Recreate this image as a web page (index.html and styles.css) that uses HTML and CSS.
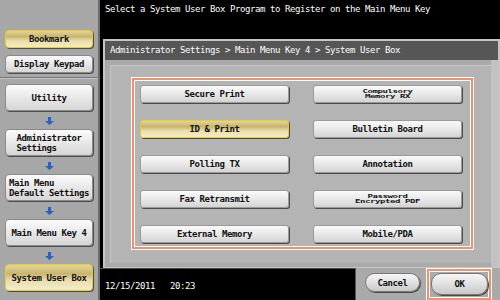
FILE: index.html
```html
<!DOCTYPE html>
<html lang="en">
<head>
  <meta charset="UTF-8">
  <title>Main Menu Key - System User Box</title>
  <link rel="stylesheet" href="styles.css">
</head>
<body>
  <div class="sidebar">
    <div class="side-top">
      <div class="sbtn short active">Bookmark</div>
      <div class="sbtn short">Display Keypad</div>
    </div>
    <div class="flow">
      <div class="sbtn">Utility</div>
      <div class="arrow"><svg width="9" height="8" viewBox="0 0 9 8"><path d="M3 0h3v4h3L4.5 8 0 4h3z" fill="#2b5fc9"/></svg></div>
      <div class="sbtn"><span class="two">Administrator<br>Settings</span></div>
      <div class="arrow"><svg width="9" height="8" viewBox="0 0 9 8"><path d="M3 0h3v4h3L4.5 8 0 4h3z" fill="#2b5fc9"/></svg></div>
      <div class="sbtn"><span class="two">Main Menu<br>Default Settings</span></div>
      <div class="arrow"><svg width="9" height="8" viewBox="0 0 9 8"><path d="M3 0h3v4h3L4.5 8 0 4h3z" fill="#2b5fc9"/></svg></div>
      <div class="sbtn">Main Menu Key 4</div>
      <div class="arrow"><svg width="9" height="8" viewBox="0 0 9 8"><path d="M3 0h3v4h3L4.5 8 0 4h3z" fill="#2b5fc9"/></svg></div>
      <div class="sbtn active">System User Box</div>
    </div>
  </div>

  <div class="main">
    <div class="title">Select a System User Box Program to Register on the Main Menu Key</div>

    <div class="panel">
      <div class="crumb">Administrator Settings &gt; Main Menu Key 4 &gt; System User Box</div>
      <div class="panel-body">
        <div class="inset">
          <div class="choices">
            <div class="btn">Secure Print</div>
            <div class="btn"><span class="tiny">Compulsory<br>Memory RX</span></div>
            <div class="btn active">ID &amp; Print</div>
            <div class="btn">Bulletin Board</div>
            <div class="btn">Polling TX</div>
            <div class="btn">Annotation</div>
            <div class="btn">Fax Retransmit</div>
            <div class="btn"><span class="tiny">Password<br>Encrypted PDF</span></div>
            <div class="btn">External Memory</div>
            <div class="btn">Mobile/PDA</div>
          </div>
        </div>
        <div class="rail"></div>
      </div>
    </div>

    <div class="bottom">
      <div class="clock">12/15/2011   20:23</div>
      <div class="actions">
        <div class="pill cancel">Cancel</div>
        <div class="ok-ring"><div class="pill ok">OK</div></div>
      </div>
    </div>
  </div>
</body>
</html>
```

FILE: styles.css
```css
body {
  margin: 0;
  width: 500px;
  height: 300px;
  overflow: hidden;
  background-color: #000;
  display: flex;
  font-family: "DejaVu Sans Mono", "Liberation Mono", monospace;
  font-size: 9px;
  letter-spacing: -0.42px;
  color: #111;
}

/* left column */
.sidebar {
  width: 98px;
  flex: none;
  background-color: #a7a7a7;
  border-right: 2px solid #6c6c6c;
}
.side-top {
  height: 78px;
  box-sizing: border-box;
  padding: 30px 0 0 5px;
  display: flex;
  flex-direction: column;
  gap: 7px;
  border-bottom: 1px solid #767676;
}
.flow {
  border-top: 1px solid #c4c4c4;
  padding: 5px 0 0 5px;
  display: flex;
  flex-direction: column;
}
.sbtn {
  width: 88px;
  height: 27px;
  box-sizing: border-box;
  border: 1px solid #8a8a8a;
  border-radius: 4px;
  background: linear-gradient(#fbfbfb, #e4e4e4 60%, #d6d6d6);
  box-shadow: 1px 1px 0 #4e4e4e;
  display: flex;
  align-items: center;
  justify-content: center;
  font-weight: bold;
  line-height: 10px;
}
.sbtn.short {
  height: 18px;
}
.sbtn.active, .btn.active {
  border-color: #e6cf2c;
  background: linear-gradient(#e2d49a, #c9b46c 35%, #e8dcaa 60%, #f4edcc);
}
.two {
  text-align: left;
}
.arrow {
  height: 18px;
  width: 88px;
  display: flex;
  align-items: center;
  justify-content: center;
  padding-top: 2px;
  box-sizing: border-box;
}
.arrow svg {
  display: block;
}

/* right side */
.main {
  flex: 1;
  display: flex;
  flex-direction: column;
}
.title {
  height: 39px;
  box-sizing: border-box;
  padding: 4px 0 0 5px;
  color: #fff;
}
.panel {
  margin-left: 3px;
  height: 229px;
  box-sizing: border-box;
  border: 2px solid #c5c5c5;
  border-bottom-width: 1px;
  display: flex;
  flex-direction: column;
}
.crumb {
  height: 19px;
  line-height: 19px;
  padding-left: 5px;
  background-color: #565656;
  color: #fff;
}
.panel-body {
  flex: 1;
  display: flex;
  background-color: #aaaaaa;
}
.inset {
  flex: 1;
  margin: 5px 0 4px 5px;
  background-color: #b4b4b4;
  border-top: 1px solid #c6c6c6;
  border-left: 1px solid #c6c6c6;
  padding: 12px 0 0 21px;
}
.rail {
  width: 7px;
  background-color: #c2c2c2;
}
.choices {
  width: 341px;
  box-sizing: border-box;
  border: 2px solid #f0906c;
  box-shadow: 0 0 0 1px #fff, inset 0 0 0 1px #fff;
  padding: 5px 9px 4px 6px;
  display: grid;
  grid-template-columns: 149px 149px;
  grid-auto-rows: 18px;
  column-gap: 24px;
  row-gap: 17px;
}
.btn {
  box-sizing: border-box;
  border: 1px solid #9a9a9a;
  border-radius: 3px;
  background: linear-gradient(#fafafa, #e6e6e6 55%, #d4d4d4);
  box-shadow: 1px 1px 0 #4a4a4a;
  display: flex;
  align-items: center;
  justify-content: center;
  font-weight: bold;
}
.tiny {
  display: inline-block;
  text-align: center;
  line-height: 9px;
  transform: scaleY(0.56);
}

/* bottom strip */
.bottom {
  flex: 1;
  display: flex;
}
.clock {
  width: 255px;
  box-sizing: border-box;
  border-top: 1px solid #4a4a4a;
  padding: 12px 0 0 5px;
  color: #fff;
  white-space: pre;
}
.actions {
  flex: 1;
  background-color: #aaaaaa;
  border-left: 1px solid #555;
  display: flex;
  align-items: flex-start;
  padding: 5px 0 0 9px;
  gap: 7px;
}
.pill {
  box-sizing: border-box;
  border: 1px solid #777;
  border-radius: 10px;
  background: linear-gradient(#f6f6f6, #dcdcdc 60%, #c8c8c8);
  box-shadow: 1px 1px 0 #4a4a4a;
  display: flex;
  align-items: center;
  justify-content: center;
  font-weight: bold;
}
.cancel {
  width: 55px;
  height: 19px;
}
.ok-ring {
  margin-top: -4px;
  width: 64px;
  height: 31px;
  box-sizing: border-box;
  border: 2px solid #f0906c;
  box-shadow: 0 0 0 1px #fff, inset 0 0 0 1px #fff;
  padding: 2px 0 0 2px;
}
.ok {
  width: 57px;
  height: 22px;
}
```
